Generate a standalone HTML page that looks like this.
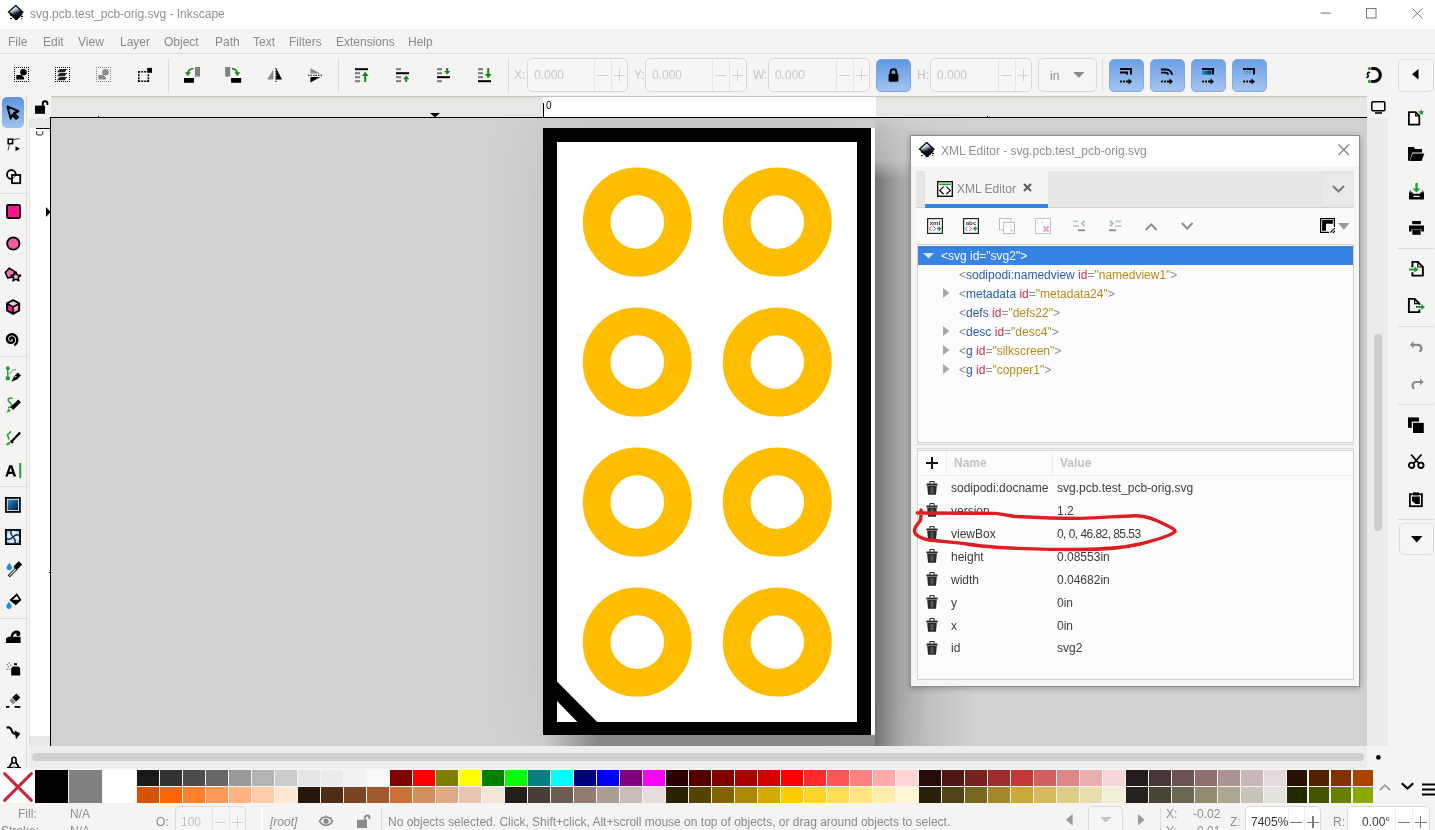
<!DOCTYPE html><html><head><meta charset="utf-8"><style>
*{margin:0;padding:0;box-sizing:border-box}
html,body{width:1435px;height:830px;overflow:hidden;background:#f5f4f2;font-family:"Liberation Sans",sans-serif;font-size:12px;position:relative}
.t{position:absolute;white-space:nowrap;line-height:14px;will-change:transform}
svg{position:absolute;overflow:visible}
</style></head><body>
<div style="position:absolute;left:0px;top:0px;width:1435px;height:29px;background:#fff"></div>
<div class="t" style="left:29.5px;top:7px;color:#8f8f8f">svg.pcb.test_pcb-orig.svg - Inkscape</div>
<div style="position:absolute;left:0px;top:53px;width:1435px;height:1px;background:#dfdedc"></div>
<div class="t" style="left:8px;top:35px;color:#8a8a8a">File</div>
<div class="t" style="left:42.5px;top:35px;color:#8a8a8a">Edit</div>
<div class="t" style="left:78px;top:35px;color:#8a8a8a">View</div>
<div class="t" style="left:119.5px;top:35px;color:#8a8a8a">Layer</div>
<div class="t" style="left:163.5px;top:35px;color:#8a8a8a">Object</div>
<div class="t" style="left:214.5px;top:35px;color:#8a8a8a">Path</div>
<div class="t" style="left:253px;top:35px;color:#8a8a8a">Text</div>
<div class="t" style="left:289px;top:35px;color:#8a8a8a">Filters</div>
<div class="t" style="left:336px;top:35px;color:#8a8a8a">Extensions</div>
<div class="t" style="left:408px;top:35px;color:#8a8a8a">Help</div>
<div style="position:absolute;left:51px;top:118px;width:1316px;height:628px;background:#d1d1d1"></div>
<div style="position:absolute;left:51px;top:96px;width:1316px;height:22px;background:#e8e7e5"></div>
<div style="position:absolute;left:543px;top:97px;width:333px;height:20px;background:#fff"></div>
<div style="position:absolute;left:51px;top:96px;width:1316px;height:1px;background:#c6c5c1"></div>
<div style="position:absolute;left:51px;top:97px;width:1316px;height:4px;background:linear-gradient(rgba(0,0,0,.035),rgba(0,0,0,0))"></div>
<div style="position:absolute;left:51px;top:117px;width:1316px;height:1px;background:#000"></div>
<div style="position:absolute;left:29px;top:118px;width:22px;height:628px;background:#e8e7e5"></div>
<div style="position:absolute;left:29px;top:128px;width:21px;height:608px;background:#fff"></div>
<div style="position:absolute;left:50px;top:117px;width:1px;height:629px;background:#000"></div>
<div style="position:absolute;left:51px;top:118px;width:1316px;height:628px;overflow:hidden">
<div style="position:absolute;left:824px;top:0px;width:100px;height:628px;background:linear-gradient(to right,rgba(0,0,0,.44) 0,rgba(0,0,0,.30) 12px,rgba(0,0,0,.19) 25px,rgba(0,0,0,.08) 55px,rgba(0,0,0,.03) 80px,rgba(0,0,0,0) 100px);-webkit-mask-image:linear-gradient(to bottom,rgba(0,0,0,.04) 0,rgba(0,0,0,.2) 12px,rgba(0,0,0,.3) 42px,#000 62px)"></div>
<div style="position:absolute;left:492px;top:617px;width:332px;height:11px;background:rgba(0,0,0,.32);-webkit-mask-image:linear-gradient(to right,transparent 0,#000 55px)"></div>
<div style="position:absolute;left:492px;top:10px;width:332px;height:607px;background:#fff;box-shadow:0 0 60px rgba(0,0,0,0.09)"></div>
<div style="position:absolute;left:492px;top:10px;width:328px;height:607px;background:#000"></div>
<div style="position:absolute;left:506px;top:24px;width:300px;height:580px;background:#fff"></div>
<svg style="left:0;top:0" width="1316" height="628"><polygon points="506,563.4 546.2,604 526.4,604 506,583.1" fill="#000"/></svg>
<svg style="left:0;top:0" width="1316" height="628"><circle cx="586.25" cy="104.1" r="40.65" fill="none" stroke="#ffbd00" stroke-width="27.7"/><circle cx="586.25" cy="244.10000000000002" r="40.65" fill="none" stroke="#ffbd00" stroke-width="27.7"/><circle cx="586.25" cy="384.1" r="40.65" fill="none" stroke="#ffbd00" stroke-width="27.7"/><circle cx="586.25" cy="524.1" r="40.65" fill="none" stroke="#ffbd00" stroke-width="27.7"/><circle cx="726.25" cy="104.1" r="40.65" fill="none" stroke="#ffbd00" stroke-width="27.7"/><circle cx="726.25" cy="244.10000000000002" r="40.65" fill="none" stroke="#ffbd00" stroke-width="27.7"/><circle cx="726.25" cy="384.1" r="40.65" fill="none" stroke="#ffbd00" stroke-width="27.7"/><circle cx="726.25" cy="524.1" r="40.65" fill="none" stroke="#ffbd00" stroke-width="27.7"/></svg>
</div>
<div style="position:absolute;left:910px;top:135px;width:450px;height:552px;background:#f6f5f4;border:1px solid #8e8e8e;box-shadow:0 1px 6px rgba(0,0,0,0.3)"></div>
<div style="position:absolute;left:911px;top:136px;width:448px;height:30px;background:#fff"></div>
<div class="t" style="left:940.5px;top:144px;color:#8f8f8f">XML Editor - svg.pcb.test_pcb-orig.svg</div>
<svg style="left:1338px;top:144px" width="12" height="12"><path d="M0.5 0.5L11 11M11 0.5L0.5 11" stroke="#7a7a7a" stroke-width="1.1"/></svg>
<div style="position:absolute;left:916px;top:171px;width:438px;height:37px;background:#e7e6e4;border-bottom:1px solid #d4d3d1"></div>
<div style="position:absolute;left:924.5px;top:171px;width:123px;height:37px;background:#f5f4f2"></div>
<div style="position:absolute;left:924.5px;top:204px;width:123px;height:3.5px;background:#3584e4"></div>
<div class="t" style="left:957px;top:182px;color:#8a8a8a">XML Editor</div>
<svg style="left:1023px;top:183px" width="9" height="9"><path d="M1 1L8 8M8 1L1 8" stroke="#5a5a5a" stroke-width="2"/></svg>
<div style="position:absolute;left:1323px;top:174px;width:31px;height:30px;background:#ebeae8;border-radius:5px"></div>
<svg style="left:1331.5px;top:185px" width="13" height="8"><path d="M1 1L6.5 6.5L12 1" fill="none" stroke="#7a7a7a" stroke-width="2"/></svg>
<div style="position:absolute;left:916px;top:208px;width:438px;height:37px;background:#fafafa"></div>
<div style="position:absolute;left:917px;top:244px;width:437px;height:199px;background:#fcfcfc;border:1px solid #d3d2d0"></div>
<div style="position:absolute;left:918px;top:245.5px;width:434.5px;height:19px;background:#3584e4"></div>
<div style="position:absolute;left:916px;top:444px;width:438px;height:1px;background:#d8d7d5"></div>
<div style="position:absolute;left:916px;top:448px;width:438px;height:1px;background:#d8d7d5"></div>
<div style="position:absolute;left:917px;top:450px;width:437px;height:230px;background:#fcfcfc;border:1px solid #d3d2d0"></div>
<div style="position:absolute;left:918px;top:475px;width:435px;height:1px;background:#ededed"></div>
<div style="position:absolute;left:946px;top:451px;width:1px;height:24px;background:#f0f0f0"></div>
<div style="position:absolute;left:1052px;top:451px;width:1px;height:24px;background:#f0f0f0"></div>
<div class="t" style="left:954px;top:456px;color:#c2c2c2;font-weight:bold">Name</div>
<div class="t" style="left:1059.5px;top:456px;color:#c2c2c2;font-weight:bold">Value</div>
<div class="t" style="left:941.2px;top:248.5px;color:#fff">&lt;svg id="svg2"&gt;</div>
<svg style="left:922.5px;top:253px" width="11" height="6"><polygon points="0,0 11,0 5.5,5.5" fill="#d6e6fb"/></svg>
<div class="t" style="left:958.9px;top:267.5px;"><span style="color:#8c8c8c">&lt;</span><span style="color:#2e5cac">sodipodi:namedview</span> <span style="color:#c4304c">id</span><span style="color:#909090">=</span><span style="color:#b38d1c">"namedview1"</span><span style="color:#8c8c8c">&gt;</span></div>
<div class="t" style="left:958.9px;top:286.5px;"><span style="color:#8c8c8c">&lt;</span><span style="color:#2e5cac">metadata</span> <span style="color:#c4304c">id</span><span style="color:#909090">=</span><span style="color:#b38d1c">"metadata24"</span><span style="color:#8c8c8c">&gt;</span></div>
<svg style="left:943px;top:288.0px" width="7" height="10"><polygon points="0,0 6.5,5 0,10" fill="#a8a8a8"/></svg>
<div class="t" style="left:958.9px;top:305.5px;"><span style="color:#8c8c8c">&lt;</span><span style="color:#2e5cac">defs</span> <span style="color:#c4304c">id</span><span style="color:#909090">=</span><span style="color:#b38d1c">"defs22"</span><span style="color:#8c8c8c">&gt;</span></div>
<div class="t" style="left:958.9px;top:324.5px;"><span style="color:#8c8c8c">&lt;</span><span style="color:#2e5cac">desc</span> <span style="color:#c4304c">id</span><span style="color:#909090">=</span><span style="color:#b38d1c">"desc4"</span><span style="color:#8c8c8c">&gt;</span></div>
<svg style="left:943px;top:326.0px" width="7" height="10"><polygon points="0,0 6.5,5 0,10" fill="#a8a8a8"/></svg>
<div class="t" style="left:958.9px;top:343.5px;"><span style="color:#8c8c8c">&lt;</span><span style="color:#2e5cac">g</span> <span style="color:#c4304c">id</span><span style="color:#909090">=</span><span style="color:#b38d1c">"silkscreen"</span><span style="color:#8c8c8c">&gt;</span></div>
<svg style="left:943px;top:345.0px" width="7" height="10"><polygon points="0,0 6.5,5 0,10" fill="#a8a8a8"/></svg>
<div class="t" style="left:958.9px;top:362.5px;"><span style="color:#8c8c8c">&lt;</span><span style="color:#2e5cac">g</span> <span style="color:#c4304c">id</span><span style="color:#909090">=</span><span style="color:#b38d1c">"copper1"</span><span style="color:#8c8c8c">&gt;</span></div>
<svg style="left:943px;top:364.0px" width="7" height="10"><polygon points="0,0 6.5,5 0,10" fill="#a8a8a8"/></svg>
<svg style="left:926.3px;top:480.5px" width="12" height="14" viewBox="0 0 12 14"><defs><linearGradient id="tg" x1="0" x2="1"><stop offset="0" stop-color="#222"/><stop offset="0.5" stop-color="#777"/><stop offset="1" stop-color="#222"/></linearGradient></defs><path d="M3.8 2.4V1.4a0.9 0.9 0 0 1 0.9-0.9h2.6a0.9 0.9 0 0 1 0.9 0.9V2.4" fill="none" stroke="#2a2a2a" stroke-width="1.1"/><rect x="0.3" y="2.4" width="11.4" height="2" rx="0.6" fill="#2a2a2a"/><path d="M1.2 4.8h9.6l-0.8 8.9h-8z" fill="#2a2a2a"/><path d="M3.3 6v6.4h5.4V6z" fill="url(#tg)"/><path d="M5 6v6.4M7 6v6.4" stroke="#2a2a2a" stroke-width="0.6"/></svg>
<div class="t" style="left:951.4px;top:480.8px;color:#3c3c3c">sodipodi:docname</div>
<div class="t" style="left:1057.3px;top:480.8px;color:#3c3c3c">svg.pcb.test_pcb-orig.svg</div>
<svg style="left:926.3px;top:503.45px" width="12" height="14" viewBox="0 0 12 14"><defs><linearGradient id="tg" x1="0" x2="1"><stop offset="0" stop-color="#222"/><stop offset="0.5" stop-color="#777"/><stop offset="1" stop-color="#222"/></linearGradient></defs><path d="M3.8 2.4V1.4a0.9 0.9 0 0 1 0.9-0.9h2.6a0.9 0.9 0 0 1 0.9 0.9V2.4" fill="none" stroke="#2a2a2a" stroke-width="1.1"/><rect x="0.3" y="2.4" width="11.4" height="2" rx="0.6" fill="#2a2a2a"/><path d="M1.2 4.8h9.6l-0.8 8.9h-8z" fill="#2a2a2a"/><path d="M3.3 6v6.4h5.4V6z" fill="url(#tg)"/><path d="M5 6v6.4M7 6v6.4" stroke="#2a2a2a" stroke-width="0.6"/></svg>
<div class="t" style="left:951.4px;top:503.75px;color:#3c3c3c">version</div>
<div class="t" style="left:1057.3px;top:503.75px;color:#3c3c3c">1.2</div>
<svg style="left:926.3px;top:526.4000000000001px" width="12" height="14" viewBox="0 0 12 14"><defs><linearGradient id="tg" x1="0" x2="1"><stop offset="0" stop-color="#222"/><stop offset="0.5" stop-color="#777"/><stop offset="1" stop-color="#222"/></linearGradient></defs><path d="M3.8 2.4V1.4a0.9 0.9 0 0 1 0.9-0.9h2.6a0.9 0.9 0 0 1 0.9 0.9V2.4" fill="none" stroke="#2a2a2a" stroke-width="1.1"/><rect x="0.3" y="2.4" width="11.4" height="2" rx="0.6" fill="#2a2a2a"/><path d="M1.2 4.8h9.6l-0.8 8.9h-8z" fill="#2a2a2a"/><path d="M3.3 6v6.4h5.4V6z" fill="url(#tg)"/><path d="M5 6v6.4M7 6v6.4" stroke="#2a2a2a" stroke-width="0.6"/></svg>
<div class="t" style="left:951.4px;top:526.7px;color:#3c3c3c">viewBox</div>
<div class="t" style="left:1057.3px;top:526.7px;color:#3c3c3c;letter-spacing:-0.55px">0, 0, 46.82, 85.53</div>
<svg style="left:926.3px;top:549.35px" width="12" height="14" viewBox="0 0 12 14"><defs><linearGradient id="tg" x1="0" x2="1"><stop offset="0" stop-color="#222"/><stop offset="0.5" stop-color="#777"/><stop offset="1" stop-color="#222"/></linearGradient></defs><path d="M3.8 2.4V1.4a0.9 0.9 0 0 1 0.9-0.9h2.6a0.9 0.9 0 0 1 0.9 0.9V2.4" fill="none" stroke="#2a2a2a" stroke-width="1.1"/><rect x="0.3" y="2.4" width="11.4" height="2" rx="0.6" fill="#2a2a2a"/><path d="M1.2 4.8h9.6l-0.8 8.9h-8z" fill="#2a2a2a"/><path d="M3.3 6v6.4h5.4V6z" fill="url(#tg)"/><path d="M5 6v6.4M7 6v6.4" stroke="#2a2a2a" stroke-width="0.6"/></svg>
<div class="t" style="left:951.4px;top:549.65px;color:#3c3c3c">height</div>
<div class="t" style="left:1057.3px;top:549.65px;color:#3c3c3c">0.08553in</div>
<svg style="left:926.3px;top:572.3000000000001px" width="12" height="14" viewBox="0 0 12 14"><defs><linearGradient id="tg" x1="0" x2="1"><stop offset="0" stop-color="#222"/><stop offset="0.5" stop-color="#777"/><stop offset="1" stop-color="#222"/></linearGradient></defs><path d="M3.8 2.4V1.4a0.9 0.9 0 0 1 0.9-0.9h2.6a0.9 0.9 0 0 1 0.9 0.9V2.4" fill="none" stroke="#2a2a2a" stroke-width="1.1"/><rect x="0.3" y="2.4" width="11.4" height="2" rx="0.6" fill="#2a2a2a"/><path d="M1.2 4.8h9.6l-0.8 8.9h-8z" fill="#2a2a2a"/><path d="M3.3 6v6.4h5.4V6z" fill="url(#tg)"/><path d="M5 6v6.4M7 6v6.4" stroke="#2a2a2a" stroke-width="0.6"/></svg>
<div class="t" style="left:951.4px;top:572.6px;color:#3c3c3c">width</div>
<div class="t" style="left:1057.3px;top:572.6px;color:#3c3c3c">0.04682in</div>
<svg style="left:926.3px;top:595.25px" width="12" height="14" viewBox="0 0 12 14"><defs><linearGradient id="tg" x1="0" x2="1"><stop offset="0" stop-color="#222"/><stop offset="0.5" stop-color="#777"/><stop offset="1" stop-color="#222"/></linearGradient></defs><path d="M3.8 2.4V1.4a0.9 0.9 0 0 1 0.9-0.9h2.6a0.9 0.9 0 0 1 0.9 0.9V2.4" fill="none" stroke="#2a2a2a" stroke-width="1.1"/><rect x="0.3" y="2.4" width="11.4" height="2" rx="0.6" fill="#2a2a2a"/><path d="M1.2 4.8h9.6l-0.8 8.9h-8z" fill="#2a2a2a"/><path d="M3.3 6v6.4h5.4V6z" fill="url(#tg)"/><path d="M5 6v6.4M7 6v6.4" stroke="#2a2a2a" stroke-width="0.6"/></svg>
<div class="t" style="left:951.4px;top:595.55px;color:#3c3c3c">y</div>
<div class="t" style="left:1057.3px;top:595.55px;color:#3c3c3c">0in</div>
<svg style="left:926.3px;top:618.2px" width="12" height="14" viewBox="0 0 12 14"><defs><linearGradient id="tg" x1="0" x2="1"><stop offset="0" stop-color="#222"/><stop offset="0.5" stop-color="#777"/><stop offset="1" stop-color="#222"/></linearGradient></defs><path d="M3.8 2.4V1.4a0.9 0.9 0 0 1 0.9-0.9h2.6a0.9 0.9 0 0 1 0.9 0.9V2.4" fill="none" stroke="#2a2a2a" stroke-width="1.1"/><rect x="0.3" y="2.4" width="11.4" height="2" rx="0.6" fill="#2a2a2a"/><path d="M1.2 4.8h9.6l-0.8 8.9h-8z" fill="#2a2a2a"/><path d="M3.3 6v6.4h5.4V6z" fill="url(#tg)"/><path d="M5 6v6.4M7 6v6.4" stroke="#2a2a2a" stroke-width="0.6"/></svg>
<div class="t" style="left:951.4px;top:618.5px;color:#3c3c3c">x</div>
<div class="t" style="left:1057.3px;top:618.5px;color:#3c3c3c">0in</div>
<svg style="left:926.3px;top:641.1500000000001px" width="12" height="14" viewBox="0 0 12 14"><defs><linearGradient id="tg" x1="0" x2="1"><stop offset="0" stop-color="#222"/><stop offset="0.5" stop-color="#777"/><stop offset="1" stop-color="#222"/></linearGradient></defs><path d="M3.8 2.4V1.4a0.9 0.9 0 0 1 0.9-0.9h2.6a0.9 0.9 0 0 1 0.9 0.9V2.4" fill="none" stroke="#2a2a2a" stroke-width="1.1"/><rect x="0.3" y="2.4" width="11.4" height="2" rx="0.6" fill="#2a2a2a"/><path d="M1.2 4.8h9.6l-0.8 8.9h-8z" fill="#2a2a2a"/><path d="M3.3 6v6.4h5.4V6z" fill="url(#tg)"/><path d="M5 6v6.4M7 6v6.4" stroke="#2a2a2a" stroke-width="0.6"/></svg>
<div class="t" style="left:951.4px;top:641.45px;color:#3c3c3c">id</div>
<div class="t" style="left:1057.3px;top:641.45px;color:#3c3c3c">svg2</div>
<svg style="left:926px;top:457px" width="12" height="12"><path d="M6 0v12M0 6h12" stroke="#111" stroke-width="2"/></svg>
<svg style="left:0;top:0" width="1435" height="830"><path d="M917.3 513 C940 513,975 513,995.4 513.4 C1003 514,1010 516,1015 516.5 C1040 517.8,1060 518.4,1080 518.4 C1100 518,1120 516,1135 515.7 C1145 515.5,1152 518,1162 523 C1170 527,1176 529.5,1175 531.5 C1173 534,1160 539,1140 544 C1125 547.5,1100 549.5,1080 549.5 C1055 549.5,1030 548.8,1015 548.3 C1000 547.5,990 546.8,981.6 546 C970 544.8,965 543.5,958.6 542.9 C945 541.5,935 541,928 539.8 C920 538,915 535.5,914.5 531.5 C914 527,918 524,920 521 C921.5 518,921 513,921 510" fill="none" stroke="#dc1f22" stroke-width="3.4" stroke-linecap="round" stroke-linejoin="round"/></svg>
<svg style="left:8.3px;top:5px" width="16" height="16" viewBox="0 0 16 16"><defs><linearGradient id="lg" x1="0.25" y1="0.1" x2="0.75" y2="0.9"><stop offset="0" stop-color="#ffffff"/><stop offset="0.35" stop-color="#c9d0dc"/><stop offset="0.7" stop-color="#1c2740"/><stop offset="1" stop-color="#05070c"/></linearGradient></defs><polygon points="7.7,0.6 15,7.3 7.7,11.6 0.4,7.3" fill="url(#lg)" stroke="#0a0a0a" stroke-width="1.3" stroke-linejoin="round"/><path d="M1.6 8.4L5 10.2L10.6 10.2L14.2 8.6L14.6 9.8L12.4 11.2L11.8 12.6L10.4 13.2L9.8 14.6L8.4 15.2L6.8 15L6.2 13.6L4.8 12.8L3.8 11.2L2 10.4z" fill="#000"/><rect x="2" y="13" width="1.8" height="1.1" fill="#000"/><rect x="13" y="11" width="2" height="1.1" fill="#000"/><rect x="13.2" y="13.1" width="1" height="1" fill="#000"/></svg>
<svg style="left:919px;top:142.3px" width="16" height="16" viewBox="0 0 16 16"><defs><linearGradient id="lg" x1="0.25" y1="0.1" x2="0.75" y2="0.9"><stop offset="0" stop-color="#ffffff"/><stop offset="0.35" stop-color="#c9d0dc"/><stop offset="0.7" stop-color="#1c2740"/><stop offset="1" stop-color="#05070c"/></linearGradient></defs><polygon points="7.7,0.6 15,7.3 7.7,11.6 0.4,7.3" fill="url(#lg)" stroke="#0a0a0a" stroke-width="1.3" stroke-linejoin="round"/><path d="M1.6 8.4L5 10.2L10.6 10.2L14.2 8.6L14.6 9.8L12.4 11.2L11.8 12.6L10.4 13.2L9.8 14.6L8.4 15.2L6.8 15L6.2 13.6L4.8 12.8L3.8 11.2L2 10.4z" fill="#000"/><rect x="2" y="13" width="1.8" height="1.1" fill="#000"/><rect x="13" y="11" width="2" height="1.1" fill="#000"/><rect x="13.2" y="13.1" width="1" height="1" fill="#000"/></svg>
<svg style="left:1320px;top:12px" width="12" height="2" viewBox="0 0 12 2"><rect x="0.5" y="0.6" width="10.4" height="1" fill="#767676"/></svg>
<svg style="left:1366px;top:8px" width="11" height="11" viewBox="0 0 11 11"><rect x="0.5" y="0.5" width="9.5" height="9.5" fill="none" stroke="#767676" stroke-width="1"/></svg>
<svg style="left:1411.5px;top:8px" width="11" height="11" viewBox="0 0 11 11"><path d="M0.3 0.3L10.5 10.5M10.5 0.3L0.3 10.5" stroke="#767676" stroke-width="1"/></svg>
<svg style="left:14px;top:67px" width="15" height="15" viewBox="0 0 15 15"><rect x="0" y="0" width="1" height="1" fill="#000"/><rect x="0" y="14" width="1" height="1" fill="#000"/><rect x="2" y="0" width="1" height="1" fill="#000"/><rect x="2" y="14" width="1" height="1" fill="#000"/><rect x="0" y="2" width="1" height="1" fill="#000"/><rect x="14" y="2" width="1" height="1" fill="#000"/><rect x="4" y="0" width="1" height="1" fill="#000"/><rect x="4" y="14" width="1" height="1" fill="#000"/><rect x="0" y="4" width="1" height="1" fill="#000"/><rect x="14" y="4" width="1" height="1" fill="#000"/><rect x="6" y="0" width="1" height="1" fill="#000"/><rect x="6" y="14" width="1" height="1" fill="#000"/><rect x="0" y="6" width="1" height="1" fill="#000"/><rect x="14" y="6" width="1" height="1" fill="#000"/><rect x="8" y="0" width="1" height="1" fill="#000"/><rect x="8" y="14" width="1" height="1" fill="#000"/><rect x="0" y="8" width="1" height="1" fill="#000"/><rect x="14" y="8" width="1" height="1" fill="#000"/><rect x="10" y="0" width="1" height="1" fill="#000"/><rect x="10" y="14" width="1" height="1" fill="#000"/><rect x="0" y="10" width="1" height="1" fill="#000"/><rect x="14" y="10" width="1" height="1" fill="#000"/><rect x="12" y="0" width="1" height="1" fill="#000"/><rect x="12" y="14" width="1" height="1" fill="#000"/><rect x="0" y="12" width="1" height="1" fill="#000"/><rect x="14" y="12" width="1" height="1" fill="#000"/><rect x="14" y="0" width="1" height="1" fill="#000"/><rect x="14" y="14" width="1" height="1" fill="#000"/><circle cx="9.5" cy="5.3" r="3.3" fill="#000"/><path d="M2.3 8h5.5a3.8 3.8 0 0 0 2.2 2.3V12.5H2.3z" fill="#000"/></svg>
<svg style="left:55px;top:67px" width="15" height="15" viewBox="0 0 15 15"><rect x="0" y="0" width="1" height="1" fill="#000"/><rect x="0" y="14" width="1" height="1" fill="#000"/><rect x="2" y="0" width="1" height="1" fill="#000"/><rect x="2" y="14" width="1" height="1" fill="#000"/><rect x="0" y="2" width="1" height="1" fill="#000"/><rect x="14" y="2" width="1" height="1" fill="#000"/><rect x="4" y="0" width="1" height="1" fill="#000"/><rect x="4" y="14" width="1" height="1" fill="#000"/><rect x="0" y="4" width="1" height="1" fill="#000"/><rect x="14" y="4" width="1" height="1" fill="#000"/><rect x="6" y="0" width="1" height="1" fill="#000"/><rect x="6" y="14" width="1" height="1" fill="#000"/><rect x="0" y="6" width="1" height="1" fill="#000"/><rect x="14" y="6" width="1" height="1" fill="#000"/><rect x="8" y="0" width="1" height="1" fill="#000"/><rect x="8" y="14" width="1" height="1" fill="#000"/><rect x="0" y="8" width="1" height="1" fill="#000"/><rect x="14" y="8" width="1" height="1" fill="#000"/><rect x="10" y="0" width="1" height="1" fill="#000"/><rect x="10" y="14" width="1" height="1" fill="#000"/><rect x="0" y="10" width="1" height="1" fill="#000"/><rect x="14" y="10" width="1" height="1" fill="#000"/><rect x="12" y="0" width="1" height="1" fill="#000"/><rect x="12" y="14" width="1" height="1" fill="#000"/><rect x="0" y="12" width="1" height="1" fill="#000"/><rect x="14" y="12" width="1" height="1" fill="#000"/><rect x="14" y="0" width="1" height="1" fill="#000"/><rect x="14" y="14" width="1" height="1" fill="#000"/><path d="M4.6 2h7.6l-2.6 3.2H2z M4.6 6h7.6l-2.6 3.2H2z M4.6 10h7.6l-2.6 3.2H2z" fill="#222"/></svg>
<svg style="left:96px;top:67px" width="15" height="15" viewBox="0 0 15 15"><rect x="0" y="0" width="1" height="1" fill="#8a8a8a"/><rect x="0" y="14" width="1" height="1" fill="#8a8a8a"/><rect x="2" y="0" width="1" height="1" fill="#8a8a8a"/><rect x="2" y="14" width="1" height="1" fill="#8a8a8a"/><rect x="0" y="2" width="1" height="1" fill="#8a8a8a"/><rect x="14" y="2" width="1" height="1" fill="#8a8a8a"/><rect x="4" y="0" width="1" height="1" fill="#8a8a8a"/><rect x="4" y="14" width="1" height="1" fill="#8a8a8a"/><rect x="0" y="4" width="1" height="1" fill="#8a8a8a"/><rect x="14" y="4" width="1" height="1" fill="#8a8a8a"/><rect x="6" y="0" width="1" height="1" fill="#8a8a8a"/><rect x="6" y="14" width="1" height="1" fill="#8a8a8a"/><rect x="0" y="6" width="1" height="1" fill="#8a8a8a"/><rect x="14" y="6" width="1" height="1" fill="#8a8a8a"/><rect x="8" y="0" width="1" height="1" fill="#8a8a8a"/><rect x="8" y="14" width="1" height="1" fill="#8a8a8a"/><rect x="0" y="8" width="1" height="1" fill="#8a8a8a"/><rect x="14" y="8" width="1" height="1" fill="#8a8a8a"/><rect x="10" y="0" width="1" height="1" fill="#8a8a8a"/><rect x="10" y="14" width="1" height="1" fill="#8a8a8a"/><rect x="0" y="10" width="1" height="1" fill="#8a8a8a"/><rect x="14" y="10" width="1" height="1" fill="#8a8a8a"/><rect x="12" y="0" width="1" height="1" fill="#8a8a8a"/><rect x="12" y="14" width="1" height="1" fill="#8a8a8a"/><rect x="0" y="12" width="1" height="1" fill="#8a8a8a"/><rect x="14" y="12" width="1" height="1" fill="#8a8a8a"/><rect x="14" y="0" width="1" height="1" fill="#8a8a8a"/><rect x="14" y="14" width="1" height="1" fill="#8a8a8a"/><circle cx="9.5" cy="5.3" r="3.3" fill="#8a8a8a"/><path d="M2.3 8h5.5a3.8 3.8 0 0 0 2.2 2.3V12.5H2.3z" fill="#8a8a8a"/></svg>
<svg style="left:137px;top:67px" width="16" height="16" viewBox="0 0 16 16"><rect x="1" y="4" width="2.2" height="1.5" fill="#000"/><rect x="1" y="4" width="1.5" height="2.2" fill="#000"/><rect x="1" y="13.5" width="2.2" height="1.5" fill="#000"/><rect x="1" y="12.799999999999997" width="1.5" height="2.2" fill="#000"/><rect x="9.900000000000006" y="13.5" width="2.2" height="1.5" fill="#000"/><rect x="10.599999999999994" y="12.799999999999997" width="1.5" height="2.2" fill="#000"/><rect x="4.199999999999989" y="4" width="2" height="1.5" fill="#000"/><rect x="7.199999999999989" y="4" width="2" height="1.5" fill="#000"/><rect x="4.199999999999989" y="13.5" width="2" height="1.5" fill="#000"/><rect x="7.199999999999989" y="13.5" width="2" height="1.5" fill="#000"/><rect x="1" y="7.200000000000003" width="1.5" height="2" fill="#000"/><rect x="1" y="10.200000000000003" width="1.5" height="2" fill="#000"/><rect x="10.599999999999994" y="7.200000000000003" width="1.5" height="2" fill="#000"/><rect x="10.599999999999994" y="10.200000000000003" width="1.5" height="2" fill="#000"/><rect x="10.199999999999989" y="0.9000000000000057" width="4.8" height="4.9" fill="#000"/></svg>
<div style="position:absolute;left:168px;top:58px;width:1px;height:34px;background:#dcdbd9"></div>
<div style="position:absolute;left:338px;top:58px;width:1px;height:34px;background:#dcdbd9"></div>
<div style="position:absolute;left:508px;top:58px;width:1px;height:34px;background:#dcdbd9"></div>
<div style="position:absolute;left:1102px;top:58px;width:1px;height:34px;background:#dcdbd9"></div>
<svg style="left:184px;top:67px" width="17" height="16" viewBox="0 0 17 16"><rect x="11" y="0" width="5" height="9.6" fill="#808080"/><rect x="0" y="11" width="10" height="4.8" fill="#000"/><path d="M9.3 1.6C5.8 1.8 4.2 3.6 3.8 6.2" fill="none" stroke="#1f8c1f" stroke-width="1.9"/><path d="M0.8 5.2L3.8 9.2L6.8 5.2z" fill="#1f8c1f"/></svg>
<svg style="left:225px;top:67px" width="17" height="16" viewBox="0 0 17 16"><rect x="0.2" y="0" width="5" height="9.6" fill="#808080"/><rect x="6.1" y="11" width="10" height="4.8" fill="#000"/><path d="M6.9 1.6C10.4 1.8 12 3.6 12.4 6.2" fill="none" stroke="#1f8c1f" stroke-width="1.9"/><path d="M9.4 5.2L12.4 9.2L15.4 5.2z" fill="#1f8c1f"/></svg>
<svg style="left:267px;top:68px" width="16" height="14" viewBox="0 0 16 14"><path d="M0.2 11.5L6.4 1.5V11.5z" fill="#8c8c8c"/><path d="M9 0.3V14" stroke="#000" stroke-width="1.1" stroke-dasharray="1.5 1"/><path d="M9.2 0.2L15 11.5H9.2z" fill="#000"/></svg>
<svg style="left:308px;top:68px" width="15" height="15" viewBox="0 0 15 15"><path d="M2.4 0.2L12.4 5.5H2.4z" fill="#8c8c8c"/><path d="M0 7.3H14.2" stroke="#000" stroke-width="1.1" stroke-dasharray="1.5 1"/><path d="M2.4 9L12.4 9H2.4L2.4 14.6z" fill="#000"/><path d="M2.4 14.6L12.4 9H2.4z" fill="#000"/></svg>
<svg style="left:355px;top:68px" width="14" height="15" viewBox="0 0 14 15"><rect x="0" y="0.2" width="13" height="2" fill="#000"/><rect x="0" y="4.2" width="5" height="2" fill="#7a7a7a"/><rect x="0" y="8.2" width="5" height="2" fill="#7a7a7a"/><rect x="0" y="12.2" width="5" height="2" fill="#7a7a7a"/><path d="M10.2 14V7" stroke="#15871f" stroke-width="2"/><path d="M6.8 8L10.2 3.8L13.6 8z" fill="#15871f"/></svg>
<svg style="left:396px;top:68px" width="14" height="15" viewBox="0 0 14 15"><rect x="0" y="0.2" width="5" height="2" fill="#7a7a7a"/><rect x="0" y="4.2" width="13" height="2" fill="#000"/><rect x="0" y="8.2" width="5" height="2" fill="#7a7a7a"/><rect x="0" y="12.2" width="5" height="2" fill="#7a7a7a"/><path d="M10.2 14V10.5" stroke="#15871f" stroke-width="2"/><path d="M7 11.2L10.2 7.4L13.4 11.2z" fill="#15871f"/></svg>
<svg style="left:437px;top:68px" width="14" height="15" viewBox="0 0 14 15"><rect x="0" y="0.2" width="5" height="2" fill="#7a7a7a"/><rect x="0" y="4.2" width="5" height="2" fill="#7a7a7a"/><rect x="0" y="8.2" width="13" height="2" fill="#000"/><rect x="0" y="12.2" width="5" height="2" fill="#7a7a7a"/><path d="M10.2 0V3.6" stroke="#15871f" stroke-width="2"/><path d="M7 3L10.2 6.6L13.4 3z" fill="#15871f"/></svg>
<svg style="left:478px;top:68px" width="14" height="15" viewBox="0 0 14 15"><rect x="0" y="0.2" width="5" height="2" fill="#7a7a7a"/><rect x="0" y="4.2" width="5" height="2" fill="#7a7a7a"/><rect x="0" y="8.2" width="5" height="2" fill="#7a7a7a"/><rect x="0" y="12.2" width="13" height="2" fill="#000"/><path d="M10.2 0V6.5" stroke="#15871f" stroke-width="2"/><path d="M6.8 6L10.2 10.2L13.6 6z" fill="#15871f"/></svg>
<div class="t" style="left:514px;top:67.5px;color:#c4c4c4">X:</div><div style="position:absolute;left:527px;top:58px;width:101px;height:34px;background:#f7f6f5;border:1px solid #d9d8d6;border-radius:5px"></div><div style="position:absolute;left:593.5px;top:59px;width:1px;height:32px;background:#e6e5e3"></div><div style="position:absolute;left:610.5px;top:59px;width:1px;height:32px;background:#e6e5e3"></div><div class="t" style="left:533.5px;top:67.5px;color:#c8c8c8">0.000</div><div style="position:absolute;left:597.0px;top:74.5px;width:11px;height:1px;background:#d2d2d2"></div><div style="position:absolute;left:613.5px;top:74.5px;width:11px;height:1px;background:#d2d2d2"></div><div style="position:absolute;left:618.5px;top:69px;width:1px;height:11.5px;background:#d2d2d2"></div>
<div class="t" style="left:633.5px;top:67.5px;color:#c4c4c4">Y:</div><div style="position:absolute;left:645px;top:58px;width:101.5px;height:34px;background:#f7f6f5;border:1px solid #d9d8d6;border-radius:5px"></div><div style="position:absolute;left:711.5px;top:59px;width:1px;height:32px;background:#e6e5e3"></div><div style="position:absolute;left:728.5px;top:59px;width:1px;height:32px;background:#e6e5e3"></div><div class="t" style="left:651.5px;top:67.5px;color:#c8c8c8">0.000</div><div style="position:absolute;left:715.0px;top:74.5px;width:11px;height:1px;background:#d2d2d2"></div><div style="position:absolute;left:731.5px;top:74.5px;width:11px;height:1px;background:#d2d2d2"></div><div style="position:absolute;left:736.5px;top:69px;width:1px;height:11.5px;background:#d2d2d2"></div>
<div class="t" style="left:752.5px;top:67.5px;color:#c4c4c4">W:</div><div style="position:absolute;left:768px;top:58px;width:102px;height:34px;background:#f7f6f5;border:1px solid #d9d8d6;border-radius:5px"></div><div style="position:absolute;left:835.5px;top:59px;width:1px;height:32px;background:#e6e5e3"></div><div style="position:absolute;left:852.5px;top:59px;width:1px;height:32px;background:#e6e5e3"></div><div class="t" style="left:774.5px;top:67.5px;color:#c8c8c8">0.000</div><div style="position:absolute;left:839.0px;top:74.5px;width:11px;height:1px;background:#d2d2d2"></div><div style="position:absolute;left:855.5px;top:74.5px;width:11px;height:1px;background:#d2d2d2"></div><div style="position:absolute;left:860.5px;top:69px;width:1px;height:11.5px;background:#d2d2d2"></div>
<div class="t" style="left:916.5px;top:67.5px;color:#c4c4c4">H:</div><div style="position:absolute;left:930px;top:58px;width:101.5px;height:34px;background:#f7f6f5;border:1px solid #d9d8d6;border-radius:5px"></div><div style="position:absolute;left:997.5px;top:59px;width:1px;height:32px;background:#e6e5e3"></div><div style="position:absolute;left:1014.5px;top:59px;width:1px;height:32px;background:#e6e5e3"></div><div class="t" style="left:936.5px;top:67.5px;color:#c8c8c8">0.000</div><div style="position:absolute;left:1001.0px;top:74.5px;width:11px;height:1px;background:#d2d2d2"></div><div style="position:absolute;left:1017.5px;top:74.5px;width:11px;height:1px;background:#d2d2d2"></div><div style="position:absolute;left:1022.5px;top:69px;width:1px;height:11.5px;background:#d2d2d2"></div>
<div style="position:absolute;left:875.5px;top:58.5px;width:35px;height:33px;background:linear-gradient(#5f98e3,#a3c4ef);border:1px solid #7aa7e0;border-radius:5px"></div>
<svg style="left:887.5px;top:68px" width="11" height="14" viewBox="0 0 11 14"><path d="M2.6 6V4.2a2.9 2.9 0 0 1 5.8 0V6" fill="none" stroke="#000" stroke-width="2"/><rect x="0.6" y="5.8" width="9.8" height="8" rx="1" fill="#000"/></svg>
<div style="position:absolute;left:1037.5px;top:58px;width:59px;height:34px;background:#f6f5f4;border:1px solid #d9d8d6;border-radius:5px"></div>
<div class="t" style="left:1049.5px;top:68.5px;color:#8a8a8a">in</div>
<svg style="left:1073px;top:72px" width="12" height="6" viewBox="0 0 12 6"><path d="M0 0H11.6L5.8 5.8z" fill="#8a8a8a"/></svg>
<div style="position:absolute;left:1108.5px;top:58.5px;width:35px;height:33px;background:linear-gradient(#6aa0e8,#a6c5ee);border:1px solid #83acdf;border-radius:5px"></div>
<div style="position:absolute;left:1149.5px;top:58.5px;width:35px;height:33px;background:linear-gradient(#6aa0e8,#a6c5ee);border:1px solid #83acdf;border-radius:5px"></div>
<div style="position:absolute;left:1190.5px;top:58.5px;width:35px;height:33px;background:linear-gradient(#6aa0e8,#a6c5ee);border:1px solid #83acdf;border-radius:5px"></div>
<div style="position:absolute;left:1231.5px;top:58.5px;width:35px;height:33px;background:linear-gradient(#6aa0e8,#a6c5ee);border:1px solid #83acdf;border-radius:5px"></div>
<svg style="left:1120px;top:68px" width="13" height="17" viewBox="0 0 13 17"><path d="M0 0h12v6.6h-2V2H0z M0 3.6h8v3h-2V5.4H0z" fill="#000"/><path d="M0.2 12.6h1.8v1.8H0.2zM3.2 12.6h1.8v1.8H3.2zM6 12.6h3v1.8H6z" fill="#000"/><path d="M8.6 10.4L12 13.5L8.6 16.6z" fill="#000"/></svg>
<svg style="left:1161px;top:68px" width="13" height="17" viewBox="0 0 13 17"><path d="M0 0.6h5a7 7 0 0 1 7 6.2h-2a5 5 0 0 0-5-4.3H0z M0 3.8h4.5a3.5 3.5 0 0 1 3.5 3h-2a1.6 1.6 0 0 0-1.5-1.2H0z" fill="#000"/><path d="M0.2 12.6h1.8v1.8H0.2zM3.2 12.6h1.8v1.8H3.2zM6 12.6h3v1.8H6z" fill="#000"/><path d="M8.6 10.4L12 13.5L8.6 16.6z" fill="#000"/></svg>
<svg style="left:1202px;top:68px" width="13" height="17" viewBox="0 0 13 17"><defs><linearGradient id="gb" x1="0" x2="1"><stop offset="0" stop-color="#00a0e0"/><stop offset="1" stop-color="#002040"/></linearGradient></defs><path d="M0 0h12v6.6h-2V2H0z" fill="#000"/><rect x="0" y="2.6" width="9.4" height="4" fill="url(#gb)"/><path d="M0.2 12.6h1.8v1.8H0.2zM3.2 12.6h1.8v1.8H3.2zM6 12.6h3v1.8H6z" fill="#000"/><path d="M8.6 10.4L12 13.5L8.6 16.6z" fill="#000"/></svg>
<svg style="left:1243px;top:68px" width="13" height="17" viewBox="0 0 13 17"><path d="M0 0h12v6.6h-2V2H0z" fill="#000"/><path d="M0.8 2.8l2 1.6-2 1.6M3.6 2.8l2 1.6-2 1.6M6.4 2.8l2 1.6-2 1.6" fill="none" stroke="#2a7fd4" stroke-width="0.9"/><path d="M0.2 12.6h1.8v1.8H0.2zM3.2 12.6h1.8v1.8H3.2zM6 12.6h3v1.8H6z" fill="#000"/><path d="M8.6 10.4L12 13.5L8.6 16.6z" fill="#000"/></svg>
<svg style="left:1366px;top:67px" width="17" height="17" viewBox="0 0 17 17"><path d="M5.2 1.5H7.8A6.5 6.5 0 0 1 7.8 14.5H5.2" fill="none" stroke="#000" stroke-width="3.1"/><circle cx="3.4" cy="1.5" r="1.55" fill="#2a8a3a"/><circle cx="3.4" cy="14.4" r="1.55" fill="#2a8a3a"/><path d="M4 5.8C2.6 4.8 0.8 6 1.8 7.6C2.8 9 2 10.6 0.4 10.4" fill="none" stroke="#000" stroke-width="1.6"/></svg>
<div style="position:absolute;left:1398px;top:58.5px;width:35.5px;height:33px;background:#f6f5f4;border:1px solid #dcdbd9;border-radius:5px"></div>
<svg style="left:1412px;top:69px" width="7" height="11" viewBox="0 0 7 11"><path d="M6.5 0V10.6L0 5.3z" fill="#000"/></svg>
<div style="position:absolute;left:1.8px;top:97.2px;width:22.5px;height:30.5px;background:linear-gradient(#5b96e2,#a0c2ee);border-radius:5px"></div>
<svg style="left:6px;top:105px" width="14" height="15" viewBox="0 0 14 15"><path d="M1.5 1.5L12.5 6.2L8 8L12 12.2L10.2 13.8L6.4 9.8L4.6 13.6z" fill="#7aa8e8" stroke="#000" stroke-width="2" stroke-linejoin="round"/></svg>
<svg style="left:6.5px;top:137.5px" width="14" height="14" viewBox="0 0 14 14"><rect x="1.2" y="1.2" width="4.4" height="4.4" fill="#fff" stroke="#000" stroke-width="1.6"/><path d="M5.6 1.6L12.5 0.6M2.5 5.8L1 12.5" stroke="#333" stroke-width="0.9"/><path d="M8.5 8.2L13 10.7L8.5 13.2z" fill="#000"/></svg>
<svg style="left:5.5px;top:169px" width="15" height="15" viewBox="0 0 15 15"><circle cx="5.4" cy="5.4" r="4.4" fill="none" stroke="#000" stroke-width="1.8"/><rect x="6" y="6" width="8.2" height="8.2" fill="#fff" stroke="#000" stroke-width="1.8"/><path d="M6.6 9.4a4.4 4.4 0 0 0 2.8-2.8" stroke="#000" stroke-width="0.8" fill="none"/></svg>
<div style="position:absolute;left:0px;top:193px;width:26px;height:1px;background:#dcdbd9"></div>
<svg style="left:5.5px;top:203.5px" width="15" height="15" viewBox="0 0 15 15"><rect x="1" y="1" width="13" height="13" rx="1.2" fill="#ff148c" stroke="#000" stroke-width="1.8"/></svg>
<svg style="left:5.5px;top:235.5px" width="15" height="15" viewBox="0 0 15 15"><circle cx="7.3" cy="7.5" r="6.2" fill="#f05aa0" stroke="#000" stroke-width="1.8"/></svg>
<svg style="left:4px;top:266px" width="18" height="18" viewBox="0 0 18 18"><polygon points="5.2,2.3 10.6,5.4 9.2,11 3.7,12 1.3,6.5" fill="#f071ab" stroke="#000" stroke-width="1.6" stroke-linejoin="round"/><polygon points="11.90,5.90 13.25,9.04 16.66,9.35 14.09,11.61 14.84,14.95 11.90,13.20 8.96,14.95 9.71,11.61 7.14,9.35 10.55,9.04" fill="#f7c0da" stroke="#000" stroke-width="1.5" stroke-linejoin="round"/></svg>
<svg style="left:4.9px;top:298px" width="17" height="18" viewBox="0 0 17 18"><g transform="scale(1.08)"><path d="M7.5 1L14 4.5V12L7.5 15.8L1 12V4.5z" fill="#000"/><path d="M7.5 3L11.6 5.2L7.5 7.4L3.4 5.2z" fill="#f9c6de"/><path d="M2.8 6.6L6.8 8.6V13.2L2.8 11z" fill="#f0208c"/><path d="M8.2 8.6L12.2 6.6V11L8.2 13.2z" fill="#f59ac4"/></g></svg>
<svg style="left:4.2px;top:332.5px" width="15" height="14" viewBox="0 0 15 14"><path d="M6.54 6.65 L6.45 6.57 L6.38 6.47 L6.31 6.36 L6.26 6.23 L6.23 6.09 L6.22 5.95 L6.23 5.79 L6.26 5.63 L6.31 5.47 L6.39 5.31 L6.49 5.16 L6.61 5.01 L6.76 4.88 L6.93 4.77 L7.12 4.68 L7.33 4.60 L7.55 4.56 L7.78 4.54 L8.02 4.55 L8.26 4.59 L8.50 4.67 L8.74 4.78 L8.97 4.92 L9.18 5.09 L9.38 5.29 L9.55 5.53 L9.70 5.78 L9.82 6.06 L9.90 6.36 L9.95 6.68 L9.96 7.00 L9.93 7.34 L9.86 7.67 L9.74 8.00 L9.58 8.31 L9.38 8.62 L9.14 8.90 L8.86 9.15 L8.55 9.37 L8.21 9.56 L7.84 9.71 L7.44 9.81 L7.03 9.87 L6.61 9.87 L6.19 9.82 L5.76 9.72 L5.35 9.57 L4.95 9.37 L4.57 9.11 L4.22 8.81 L3.90 8.46 L3.62 8.07 L3.39 7.64 L3.21 7.18 L3.09 6.69 L3.02 6.19 L3.01 5.68 L3.07 5.16 L3.19 4.64 L3.37 4.13 L3.62 3.65 L3.93 3.19 L4.29 2.76 L4.71 2.38 L5.18 2.05 L5.69 1.77 L6.23 1.55 L6.81 1.39 L7.41 1.31 L8.02 1.29 L8.63 1.36 L9.24 1.49 L9.84 1.70 L10.42 1.98 L10.96 2.34 L11.46 2.76 L11.91 3.24 L12.31 3.78 L12.64 4.37 L12.91 5.00 L13.09 5.67 L13.20 6.36 L13.23 7.06 L13.17 7.78 L13.02 8.48 L12.79 9.17 L12.48 9.84 L12.08 10.47 L11.61 11.05 L11.06 11.58" fill="none" stroke="#000" stroke-width="2.4" stroke-linecap="round"/></svg>
<div style="position:absolute;left:0px;top:356px;width:26px;height:1px;background:#dcdbd9"></div>
<svg style="left:4.5px;top:365.5px" width="17" height="17" viewBox="0 0 17 17"><circle cx="2.8" cy="2.2" r="1.9" fill="#1f9a2e"/><path d="M2.8 3v8" stroke="#1f9a2e" stroke-width="1.4"/><rect x="0.8" y="10.6" width="4" height="3.6" fill="#1f9a2e"/><path d="M4.5 8.5C6 5 8 3.5 11 3.5" fill="none" stroke="#777" stroke-width="0.9"/><path d="M6.5 15.8L9 10.5L12.8 6.6L16 9.6L12 13.4z" fill="#000"/><path d="M9.6 11.2L11.6 10.2" stroke="#fff" stroke-width="1"/></svg>
<svg style="left:5px;top:397px" width="16" height="17" viewBox="0 0 16 17"><path d="M7.6 1.6C5 0.4 2.4 1.6 3.4 3.8C4.4 6 7.8 6.4 6.6 8.8C6 10 4.6 10.6 3 10.6" fill="none" stroke="#2aa53a" stroke-width="1.6"/><path d="M6.8 11.6L14.6 3.8" stroke="#000" stroke-width="3.8"/><path d="M1.6 15.8L3.2 11.6L6.2 14z" fill="#2aa53a"/></svg>
<svg style="left:5px;top:430px" width="16" height="16" viewBox="0 0 16 16"><path d="M5.2 1C6.6 2.4 3.6 3.4 2.6 4.8C1.8 6 4.8 7.4 3.6 9.6" fill="none" stroke="#2aa53a" stroke-width="1.6"/><path d="M1 15.2C1.6 12.6 3.6 11.2 5.8 12.2C5 14.6 3.2 15.6 1 15.2z" fill="#2aa53a"/><path d="M6.6 11.4L15.2 2.4" stroke="#000" stroke-width="2.2"/><path d="M5.6 10.8L8 13" stroke="#000" stroke-width="2"/></svg>
<svg style="left:5px;top:462.5px" width="17" height="16" viewBox="0 0 17 16"><path d="M0.3 13.4L4.3 2.3H7.2L11.2 13.4H8.6L7.8 10.9H3.6L2.8 13.4zM4.3 8.7H7.1L5.7 4.4z" fill="#000"/><rect x="14.3" y="0" width="1.9" height="15.2" fill="#1f9a2e"/></svg>
<div style="position:absolute;left:0px;top:486px;width:26px;height:1px;background:#dcdbd9"></div>
<svg style="left:5px;top:497px" width="16" height="16" viewBox="0 0 16 16"><defs><linearGradient id="gg" x1="0" y1="0" x2="1" y2="1"><stop offset="0" stop-color="#2a8fd6"/><stop offset="1" stop-color="#031c33"/></linearGradient></defs><rect x="0.9" y="0.9" width="14" height="14" fill="#fff" stroke="#000" stroke-width="1.8"/><rect x="2.6" y="2.6" width="10.6" height="10.6" fill="url(#gg)"/></svg>
<svg style="left:5px;top:529px" width="16" height="16" viewBox="0 0 16 16"><defs><radialGradient id="gm" cx="0.5" cy="0.5" r="0.6"><stop offset="0" stop-color="#ffffff"/><stop offset="0.7" stop-color="#cfe6f7"/><stop offset="1" stop-color="#4a9ad6"/></radialGradient></defs><rect x="0.9" y="0.9" width="14.2" height="14.2" fill="url(#gm)" stroke="#000" stroke-width="1.8"/><path d="M7.2 1.2C4.6 2.6 5.8 5.6 8 8C10.2 10.4 11.4 13.4 8.8 14.8M1.2 8.8C2.6 11.4 5.6 10.2 8 8C10.4 5.8 13.4 4.6 14.8 7.2" fill="none" stroke="#0a2a4a" stroke-width="1.5"/></svg>
<svg style="left:5.5px;top:561.5px" width="15" height="15" viewBox="0 0 15 15"><path d="M3.3 0.8C4.5 2.8 6 4.2 6 5.6a2.7 2.7 0 0 1-5.4 0C0.6 4.2 2 2.8 3.3 0.8z" fill="#1a8fe0"/><path d="M2.8 14.2L10.5 6.5" stroke="#000" stroke-width="3"/><path d="M3.4 13.6L10 7" stroke="#fff" stroke-width="1.1"/><path d="M9.2 4.4L12.8 0.8L14.6 2.6L11 6.2z M8.4 4.2L11.2 7" stroke="#000" stroke-width="2.2"/></svg>
<svg style="left:5.5px;top:593px" width="16" height="16" viewBox="0 0 16 16"><path d="M3 8.6C4.2 10.6 5.6 12 5.6 13.3a2.6 2.6 0 0 1-5.2 0C0.4 12 1.8 10.6 3 8.6z" fill="#1a8fe0"/><path d="M3.4 7.1L11 0.3L15.4 6.9L9.8 12.2z" fill="#000"/><path d="M6.6 6.7L10.8 3L13.2 6.7z" fill="#fff"/></svg>
<div style="position:absolute;left:0px;top:617.5px;width:26px;height:1px;background:#dcdbd9"></div>
<svg style="left:5.8px;top:630px" width="15" height="13" viewBox="0 0 15 13"><path d="M0 13V8.6L2.4 6.8H4.6C5 3 7.6 0.6 10.6 0.6C13 0.6 14.6 2.2 14.4 4.2C14 5.8 12.6 6.6 11.2 6C10.2 5.6 10 4.4 10.8 3.6C9 3 7.2 4.6 7 6.8H14.6V13z" fill="#000"/></svg>
<svg style="left:5.8px;top:661.5px" width="15" height="14" viewBox="0 0 15 14"><circle cx="1.2" cy="2.6" r="0.8" fill="#777"/><circle cx="3.2" cy="1" r="0.8" fill="#777"/><circle cx="2.4" cy="5" r="0.8" fill="#777"/><circle cx="4.8" cy="3.4" r="0.8" fill="#777"/><circle cx="1" cy="7.2" r="0.8" fill="#777"/><circle cx="3.6" cy="7.4" r="0.7" fill="#777"/><rect x="8" y="1.2" width="3" height="2" fill="#000"/><path d="M6.6 4.4h6.2l1.4 2V13.6H5.2V6.4z" fill="#000"/></svg>
<svg style="left:6px;top:692.5px" width="15" height="15" viewBox="0 0 15 15"><path d="M10.4 0.5L14.3 4.4L10.2 8.5L6.3 4.6z" fill="#000"/><path d="M6 5L9.8 8.8L7.2 11.4L3.4 7.6z" fill="#8a8a8a"/><rect x="0" y="13" width="3.4" height="1.8" fill="#000"/><rect x="8.6" y="13" width="5.8" height="1.8" fill="#000"/></svg>
<svg style="left:6px;top:725.5px" width="15" height="14" viewBox="0 0 15 14"><path d="M0.6 1.8C3.5 0.5 5 2 6 5S8 8.2 10.5 6.8" fill="none" stroke="#000" stroke-width="2.2"/><path d="M8.5 4.6L14.4 7.5L10 13.2z" fill="#000"/></svg>
<svg style="left:6.5px;top:757px" width="14" height="11" viewBox="0 0 14 11"><path d="M5 2.2a2 2 0 0 1 4 0v2a2 2 0 0 1-4 0z" fill="none" stroke="#000" stroke-width="1.6"/><path d="M5.2 5.2L2 10.5M8.8 5.2L12 10.5" stroke="#000" stroke-width="1.8"/><path d="M0 10.5H14" stroke="#000" stroke-width="1"/><circle cx="7" cy="9.8" r="1.2" fill="#8a8a8a"/></svg>
<svg style="left:34.8px;top:100px" width="13" height="14" viewBox="0 0 13 14"><path d="M7.8 6V3.6a2.3 2.3 0 0 1 4.6 0V5" fill="none" stroke="#000" stroke-width="1.9"/><rect x="0" y="5.6" width="10" height="8.2" fill="#000"/></svg>
<svg style="left:430px;top:112.5px" width="10" height="5" viewBox="0 0 10 5"><path d="M0 0H10L5 4.6z" fill="#000"/></svg>
<svg style="left:46px;top:207px" width="4.5" height="10" viewBox="0 0 4.5 10"><path d="M0 0L4.5 5L0 10z" fill="#000"/></svg>
<div style="position:absolute;left:543px;top:103px;width:1px;height:14px;background:#000"></div>
<div class="t" style="left:545.5px;top:100px;font-size:10px;color:#000;line-height:12px">0</div>
<div style="position:absolute;left:36px;top:128px;width:14px;height:1px;background:#000"></div>
<svg style="left:36px;top:130.5px" width="8" height="5" viewBox="0 0 8 5"><path d="M0.6 0.2V2.2a1.6 1.6 0 0 0 1.6 1.8H5.2a1.6 1.6 0 0 0 1.6-1.8V0.2" fill="none" stroke="#222" stroke-width="1"/></svg>
<div style="position:absolute;left:97.5px;top:116px;width:1px;height:1.5px;background:#000"></div>
<div style="position:absolute;left:987px;top:115.5px;width:1px;height:2px;background:#000"></div>
<div style="position:absolute;left:48.5px;top:572px;width:2px;height:1.2px;background:#000"></div>
<div style="position:absolute;left:29px;top:118px;width:1px;height:628px;background:#e2e1df"></div>
<div style="position:absolute;left:1367px;top:118px;width:21px;height:628px;background:#ebebea"></div>
<div style="position:absolute;left:1373.8px;top:334px;width:8px;height:196.5px;background:#cdcdcd;border-radius:4px"></div>
<div style="position:absolute;left:29px;top:746px;width:1338px;height:22px;background:#ededec"></div>
<div style="position:absolute;left:32px;top:753px;width:1332px;height:8px;background:#d0d0d0;border-radius:4px"></div>
<svg style="left:1375.5px;top:754.5px" width="5" height="5" viewBox="0 0 5 5"><circle cx="2.4" cy="2.4" r="2.3" fill="#000"/></svg>
<svg style="left:1371px;top:101px" width="15" height="13" viewBox="0 0 15 13"><rect x="0.8" y="0.8" width="13" height="9" rx="1" fill="none" stroke="#000" stroke-width="1.5"/><rect x="4" y="11.2" width="7" height="1.6" fill="#000"/></svg>
<svg style="left:1408px;top:109px" width="17" height="16.5" viewBox="0 0 17 16.5"><path d="M0.9 3.2H7.6L11.3 6.9V15.6H0.9z" fill="#fff" stroke="#000" stroke-width="1.8" stroke-linejoin="round"/><path d="M7.6 3.2V6.9H11.3" fill="none" stroke="#000" stroke-width="1.2"/><path d="M13.2 0L14 2.3L16.5 2.4L14.5 3.9L15.2 6.3L13.2 4.9L11.2 6.3L11.9 3.9L9.9 2.4L12.4 2.3z" fill="#1e9a2e"/></svg>
<svg style="left:1408px;top:147px" width="17" height="14.5" viewBox="0 0 17 14.5"><path d="M0 0H5.6L7.3 2H14V5.6H4.2L1.6 13.8H0z" fill="#000"/><path d="M4.6 6.6H16.3L13.6 14H1.8z" fill="#000"/></svg>
<svg style="left:1408.5px;top:182.5px" width="15" height="17" viewBox="0 0 15 17"><path d="M7.5 0V6.5" stroke="#1e9a2e" stroke-width="2.2"/><path d="M3.6 5.4L7.5 9.6L11.4 5.4z" fill="#1e9a2e"/><path d="M0 9.2H3.6V10.8H11.4V9.2H15V16.6H0z M4.5 12.8v1.1h6v-1.1z" fill="#000"/><path d="M0.6 8.6L2.2 7.8M14.4 8.6L12.8 7.8" stroke="#000" stroke-width="1"/></svg>
<svg style="left:1408.5px;top:220.5px" width="15" height="14" viewBox="0 0 15 14"><rect x="3.2" y="0" width="8.6" height="3.2" fill="#000"/><path d="M0 4.4H15V10.6H12.4V8.4H2.6V10.6H0z" fill="#000"/><rect x="3.4" y="8.8" width="8.2" height="5" fill="#000"/></svg>
<div style="position:absolute;left:1397.5px;top:248px;width:36px;height:1px;background:#dcdbd9"></div>
<svg style="left:1408.5px;top:260.5px" width="15" height="16" viewBox="0 0 15 16"><path d="M3.4 11.2V14.6H13.9V6L8.8 0.9H3.4V6.2" fill="none" stroke="#000" stroke-width="1.9"/><path d="M8.8 0.9V6H13.9" fill="none" stroke="#000" stroke-width="1.2"/><path d="M0 8.5H6" stroke="#1e9a2e" stroke-width="2"/><path d="M5.4 5.6L9.6 8.5L5.4 11.4z" fill="#1e9a2e"/></svg>
<svg style="left:1408px;top:298px" width="17" height="15" viewBox="0 0 17 15"><path d="M11.4 6.8V5.6L6.6 0.9H0.9V14.1H11.4V11.4" fill="none" stroke="#000" stroke-width="1.9"/><path d="M6.6 0.9V5.6H11.4" fill="none" stroke="#000" stroke-width="1.2"/><path d="M8 9H14" stroke="#1e9a2e" stroke-width="2"/><path d="M13.4 6.1L17 9L13.4 11.9z" fill="#1e9a2e"/></svg>
<div style="position:absolute;left:1397.5px;top:326px;width:36px;height:1px;background:#dcdbd9"></div>
<svg style="left:1409.5px;top:341px" width="14" height="13" viewBox="0 0 14 13"><path d="M-0.1 3.8L3.6 0.1V7.6z" fill="#8a8a8a"/><path d="M3.2 3.9H7.7A3.5 3.5 0 0 1 9.3 10.6" fill="none" stroke="#8a8a8a" stroke-width="2.2"/></svg>
<svg style="left:1409.5px;top:378px" width="14" height="13" viewBox="0 0 14 13"><path d="M13.7 4L10 0.4V7.6z" fill="#8a8a8a"/><path d="M10.5 4H6A3.5 3.5 0 0 0 4.4 10.6" fill="none" stroke="#8a8a8a" stroke-width="2.2"/></svg>
<div style="position:absolute;left:1397.5px;top:403.5px;width:36px;height:1px;background:#dcdbd9"></div>
<svg style="left:1408px;top:416.5px" width="17" height="17" viewBox="0 0 17 17"><rect x="0" y="0.4" width="11" height="10.4" fill="#000"/><rect x="4.4" y="5.2" width="12" height="11.4" fill="#000" stroke="#f5f4f2" stroke-width="1.2"/></svg>
<svg style="left:1408px;top:454px" width="16.5" height="15" viewBox="0 0 16.5 15"><path d="M3 0.5L11 9.5M13.5 0.5L5.5 9.5" stroke="#000" stroke-width="1.8"/><circle cx="3.6" cy="11.3" r="2.7" fill="none" stroke="#000" stroke-width="1.8"/><circle cx="12.9" cy="11.3" r="2.7" fill="none" stroke="#000" stroke-width="1.8"/></svg>
<svg style="left:1408.5px;top:491.5px" width="14" height="15" viewBox="0 0 14 15"><rect x="0.9" y="2.2" width="12" height="12" fill="none" stroke="#000" stroke-width="1.8"/><rect x="4" y="0.4" width="6" height="3" fill="#000"/><path d="M3 4.6H10.8V12H6.4L3 8.8z" fill="#000"/></svg>
<div style="position:absolute;left:1397.5px;top:519px;width:36px;height:1px;background:#dcdbd9"></div>
<div style="position:absolute;left:1398.5px;top:523px;width:35px;height:32px;background:#f6f5f4;border:1px solid #dcdbd9;border-radius:5px"></div>
<svg style="left:1410.5px;top:536px" width="11.5" height="7" viewBox="0 0 11.5 7"><path d="M0 0H11.5L5.75 6.6z" fill="#000"/></svg>
<div style="position:absolute;left:0px;top:768px;width:1435px;height:36px;background:#f5f4f2"></div>
<div style="position:absolute;left:0px;top:769.8px;width:34px;height:33px;background:#fff"></div>
<svg style="left:2.5px;top:771.5px" width="30" height="30" viewBox="0 0 30 30"><path d="M1.6 1.6L28.4 28.4M28.4 1.6L1.6 28.4" stroke="#c8283c" stroke-width="3" stroke-linecap="round"/></svg>
<div style="position:absolute;left:34.8px;top:769.8px;width:33.2px;height:33px;background:#000"></div>
<div style="position:absolute;left:69.2px;top:769.8px;width:32.8px;height:33px;background:#808080"></div>
<div style="position:absolute;left:103px;top:769.8px;width:33px;height:33px;background:#fff"></div>
<div style="position:absolute;left:137px;top:769.8px;width:22px;height:16.2px;background:#1a1a1a"></div>
<div style="position:absolute;left:160px;top:769.8px;width:22px;height:16.2px;background:#333333"></div>
<div style="position:absolute;left:183px;top:769.8px;width:22px;height:16.2px;background:#4d4d4d"></div>
<div style="position:absolute;left:206px;top:769.8px;width:22px;height:16.2px;background:#666666"></div>
<div style="position:absolute;left:229px;top:769.8px;width:22px;height:16.2px;background:#999999"></div>
<div style="position:absolute;left:252px;top:769.8px;width:22px;height:16.2px;background:#b3b3b3"></div>
<div style="position:absolute;left:275px;top:769.8px;width:22px;height:16.2px;background:#cccccc"></div>
<div style="position:absolute;left:298px;top:769.8px;width:22px;height:16.2px;background:#e6e6e6"></div>
<div style="position:absolute;left:321px;top:769.8px;width:22px;height:16.2px;background:#ececec"></div>
<div style="position:absolute;left:344px;top:769.8px;width:22px;height:16.2px;background:#f2f2f2"></div>
<div style="position:absolute;left:367px;top:769.8px;width:22px;height:16.2px;background:#f9f9f9"></div>
<div style="position:absolute;left:390px;top:769.8px;width:22px;height:16.2px;background:#800000"></div>
<div style="position:absolute;left:413px;top:769.8px;width:22px;height:16.2px;background:#ff0000"></div>
<div style="position:absolute;left:436px;top:769.8px;width:22px;height:16.2px;background:#808000"></div>
<div style="position:absolute;left:459px;top:769.8px;width:22px;height:16.2px;background:#ffff00"></div>
<div style="position:absolute;left:482px;top:769.8px;width:22px;height:16.2px;background:#008000"></div>
<div style="position:absolute;left:505px;top:769.8px;width:22px;height:16.2px;background:#00ff00"></div>
<div style="position:absolute;left:528px;top:769.8px;width:22px;height:16.2px;background:#008080"></div>
<div style="position:absolute;left:551px;top:769.8px;width:22px;height:16.2px;background:#00ffff"></div>
<div style="position:absolute;left:574px;top:769.8px;width:22px;height:16.2px;background:#000080"></div>
<div style="position:absolute;left:597px;top:769.8px;width:22px;height:16.2px;background:#0000ff"></div>
<div style="position:absolute;left:620px;top:769.8px;width:22px;height:16.2px;background:#800080"></div>
<div style="position:absolute;left:643px;top:769.8px;width:22px;height:16.2px;background:#ff00ff"></div>
<div style="position:absolute;left:666px;top:769.8px;width:22px;height:16.2px;background:#2b0000"></div>
<div style="position:absolute;left:689px;top:769.8px;width:22px;height:16.2px;background:#550000"></div>
<div style="position:absolute;left:712px;top:769.8px;width:22px;height:16.2px;background:#800000"></div>
<div style="position:absolute;left:735px;top:769.8px;width:22px;height:16.2px;background:#aa0000"></div>
<div style="position:absolute;left:758px;top:769.8px;width:22px;height:16.2px;background:#d40000"></div>
<div style="position:absolute;left:781px;top:769.8px;width:22px;height:16.2px;background:#ff0000"></div>
<div style="position:absolute;left:804px;top:769.8px;width:22px;height:16.2px;background:#ff2a2a"></div>
<div style="position:absolute;left:827px;top:769.8px;width:22px;height:16.2px;background:#ff5555"></div>
<div style="position:absolute;left:850px;top:769.8px;width:22px;height:16.2px;background:#ff8080"></div>
<div style="position:absolute;left:873px;top:769.8px;width:22px;height:16.2px;background:#ffaaaa"></div>
<div style="position:absolute;left:896px;top:769.8px;width:22px;height:16.2px;background:#ffd5d5"></div>
<div style="position:absolute;left:919px;top:769.8px;width:22px;height:16.2px;background:#280b0b"></div>
<div style="position:absolute;left:942px;top:769.8px;width:22px;height:16.2px;background:#501616"></div>
<div style="position:absolute;left:965px;top:769.8px;width:22px;height:16.2px;background:#782121"></div>
<div style="position:absolute;left:988px;top:769.8px;width:22px;height:16.2px;background:#a02c2c"></div>
<div style="position:absolute;left:1011px;top:769.8px;width:22px;height:16.2px;background:#c83737"></div>
<div style="position:absolute;left:1034px;top:769.8px;width:22px;height:16.2px;background:#d35f5f"></div>
<div style="position:absolute;left:1057px;top:769.8px;width:22px;height:16.2px;background:#de8787"></div>
<div style="position:absolute;left:1080px;top:769.8px;width:22px;height:16.2px;background:#e9afaf"></div>
<div style="position:absolute;left:1103px;top:769.8px;width:22px;height:16.2px;background:#f4d7d7"></div>
<div style="position:absolute;left:1126px;top:769.8px;width:22px;height:16.2px;background:#241c1c"></div>
<div style="position:absolute;left:1149px;top:769.8px;width:22px;height:16.2px;background:#483737"></div>
<div style="position:absolute;left:1172px;top:769.8px;width:22px;height:16.2px;background:#6c5353"></div>
<div style="position:absolute;left:1195px;top:769.8px;width:22px;height:16.2px;background:#916f6f"></div>
<div style="position:absolute;left:1218px;top:769.8px;width:22px;height:16.2px;background:#ac9393"></div>
<div style="position:absolute;left:1241px;top:769.8px;width:22px;height:16.2px;background:#c8b7b7"></div>
<div style="position:absolute;left:1264px;top:769.8px;width:22px;height:16.2px;background:#e3dbdb"></div>
<div style="position:absolute;left:1286.5px;top:769.8px;width:20.2px;height:16.2px;background:#2b1100"></div>
<div style="position:absolute;left:1308.55px;top:769.8px;width:20.2px;height:16.2px;background:#552200"></div>
<div style="position:absolute;left:1330.6px;top:769.8px;width:20.2px;height:16.2px;background:#803300"></div>
<div style="position:absolute;left:1352.65px;top:769.8px;width:20.2px;height:16.2px;background:#aa4400"></div>
<div style="position:absolute;left:137px;top:787px;width:22px;height:15.8px;background:#d45500"></div>
<div style="position:absolute;left:160px;top:787px;width:22px;height:15.8px;background:#ff6600"></div>
<div style="position:absolute;left:183px;top:787px;width:22px;height:15.8px;background:#ff7f2a"></div>
<div style="position:absolute;left:206px;top:787px;width:22px;height:15.8px;background:#ff9955"></div>
<div style="position:absolute;left:229px;top:787px;width:22px;height:15.8px;background:#ffb380"></div>
<div style="position:absolute;left:252px;top:787px;width:22px;height:15.8px;background:#ffccaa"></div>
<div style="position:absolute;left:275px;top:787px;width:22px;height:15.8px;background:#ffe6d5"></div>
<div style="position:absolute;left:298px;top:787px;width:22px;height:15.8px;background:#28170b"></div>
<div style="position:absolute;left:321px;top:787px;width:22px;height:15.8px;background:#502d16"></div>
<div style="position:absolute;left:344px;top:787px;width:22px;height:15.8px;background:#784421"></div>
<div style="position:absolute;left:367px;top:787px;width:22px;height:15.8px;background:#a05a2c"></div>
<div style="position:absolute;left:390px;top:787px;width:22px;height:15.8px;background:#c87137"></div>
<div style="position:absolute;left:413px;top:787px;width:22px;height:15.8px;background:#d38d5f"></div>
<div style="position:absolute;left:436px;top:787px;width:22px;height:15.8px;background:#deaa87"></div>
<div style="position:absolute;left:459px;top:787px;width:22px;height:15.8px;background:#e9c6af"></div>
<div style="position:absolute;left:482px;top:787px;width:22px;height:15.8px;background:#f4e3d7"></div>
<div style="position:absolute;left:505px;top:787px;width:22px;height:15.8px;background:#241f1c"></div>
<div style="position:absolute;left:528px;top:787px;width:22px;height:15.8px;background:#483e37"></div>
<div style="position:absolute;left:551px;top:787px;width:22px;height:15.8px;background:#6c5d53"></div>
<div style="position:absolute;left:574px;top:787px;width:22px;height:15.8px;background:#917c6f"></div>
<div style="position:absolute;left:597px;top:787px;width:22px;height:15.8px;background:#ac9d93"></div>
<div style="position:absolute;left:620px;top:787px;width:22px;height:15.8px;background:#c8beb7"></div>
<div style="position:absolute;left:643px;top:787px;width:22px;height:15.8px;background:#e3dedb"></div>
<div style="position:absolute;left:666px;top:787px;width:22px;height:15.8px;background:#2b2200"></div>
<div style="position:absolute;left:689px;top:787px;width:22px;height:15.8px;background:#554400"></div>
<div style="position:absolute;left:712px;top:787px;width:22px;height:15.8px;background:#806600"></div>
<div style="position:absolute;left:735px;top:787px;width:22px;height:15.8px;background:#aa8800"></div>
<div style="position:absolute;left:758px;top:787px;width:22px;height:15.8px;background:#d4aa00"></div>
<div style="position:absolute;left:781px;top:787px;width:22px;height:15.8px;background:#ffcc00"></div>
<div style="position:absolute;left:804px;top:787px;width:22px;height:15.8px;background:#ffd42a"></div>
<div style="position:absolute;left:827px;top:787px;width:22px;height:15.8px;background:#ffdd55"></div>
<div style="position:absolute;left:850px;top:787px;width:22px;height:15.8px;background:#ffe680"></div>
<div style="position:absolute;left:873px;top:787px;width:22px;height:15.8px;background:#ffeeaa"></div>
<div style="position:absolute;left:896px;top:787px;width:22px;height:15.8px;background:#fff6d5"></div>
<div style="position:absolute;left:919px;top:787px;width:22px;height:15.8px;background:#28220b"></div>
<div style="position:absolute;left:942px;top:787px;width:22px;height:15.8px;background:#504416"></div>
<div style="position:absolute;left:965px;top:787px;width:22px;height:15.8px;background:#786721"></div>
<div style="position:absolute;left:988px;top:787px;width:22px;height:15.8px;background:#a0892c"></div>
<div style="position:absolute;left:1011px;top:787px;width:22px;height:15.8px;background:#c8ab37"></div>
<div style="position:absolute;left:1034px;top:787px;width:22px;height:15.8px;background:#d3bc5f"></div>
<div style="position:absolute;left:1057px;top:787px;width:22px;height:15.8px;background:#decd87"></div>
<div style="position:absolute;left:1080px;top:787px;width:22px;height:15.8px;background:#e9ddaf"></div>
<div style="position:absolute;left:1103px;top:787px;width:22px;height:15.8px;background:#f4eed7"></div>
<div style="position:absolute;left:1126px;top:787px;width:22px;height:15.8px;background:#24221c"></div>
<div style="position:absolute;left:1149px;top:787px;width:22px;height:15.8px;background:#484537"></div>
<div style="position:absolute;left:1172px;top:787px;width:22px;height:15.8px;background:#6c6753"></div>
<div style="position:absolute;left:1195px;top:787px;width:22px;height:15.8px;background:#918a6f"></div>
<div style="position:absolute;left:1218px;top:787px;width:22px;height:15.8px;background:#aca793"></div>
<div style="position:absolute;left:1241px;top:787px;width:22px;height:15.8px;background:#c8c4b7"></div>
<div style="position:absolute;left:1264px;top:787px;width:22px;height:15.8px;background:#e3e2db"></div>
<div style="position:absolute;left:1286.5px;top:787px;width:20.2px;height:15.8px;background:#222b00"></div>
<div style="position:absolute;left:1308.55px;top:787px;width:20.2px;height:15.8px;background:#445500"></div>
<div style="position:absolute;left:1330.6px;top:787px;width:20.2px;height:15.8px;background:#668000"></div>
<div style="position:absolute;left:1352.65px;top:787px;width:20.2px;height:15.8px;background:#88aa00"></div>
<svg style="left:1378.5px;top:784px" width="12" height="7" viewBox="0 0 12 7"><path d="M0.8 6.2L6 1.2L11.2 6.2" fill="none" stroke="#9a9a9a" stroke-width="1.8"/></svg>
<svg style="left:1400.5px;top:782px" width="13" height="8" viewBox="0 0 13 8"><path d="M0.8 1.2L6.5 6.6L12.2 1.2" fill="none" stroke="#000" stroke-width="2"/></svg>
<svg style="left:1421.5px;top:783px" width="14" height="13" viewBox="0 0 14 13"><path d="M0 1.5H14M0 6.5H14M0 11.5H14" stroke="#000" stroke-width="2"/></svg>
<div class="t" style="left:18px;top:807px;color:#8f8f8f">Fill:</div>
<div class="t" style="left:70.4px;top:807px;color:#8f8f8f">N/A</div>
<div class="t" style="left:1.2px;top:824px;color:#8f8f8f">Stroke:</div>
<div class="t" style="left:70.4px;top:824px;color:#8f8f8f">N/A</div>
<div class="t" style="left:156px;top:814.6px;color:#8a8a8a">O:</div>
<div style="position:absolute;left:174.5px;top:805.5px;width:71px;height:40px;background:#f6f5f4;border:1px solid #dcdbd9;border-radius:5px"></div>
<div class="t" style="left:181.2px;top:814.6px;color:#c4c4c4">100</div>
<div style="position:absolute;left:211.5px;top:806.5px;width:1px;height:24px;background:#e6e5e3"></div>
<div style="position:absolute;left:228.5px;top:806.5px;width:1px;height:24px;background:#e6e5e3"></div>
<div style="position:absolute;left:214.5px;top:821.5px;width:11px;height:1px;background:#d4d4d4"></div>
<div style="position:absolute;left:231.5px;top:821.5px;width:11px;height:1px;background:#d4d4d4"></div>
<div style="position:absolute;left:236.5px;top:816px;width:1px;height:11px;background:#d4d4d4"></div>
<div style="position:absolute;left:261px;top:808px;width:2px;height:22px;background:#fff"></div>
<div class="t" style="left:270px;top:814.6px;color:#8a8a8a;font-style:italic">[root]</div>
<svg style="left:319px;top:815px" width="14" height="11" viewBox="0 0 14 11"><path d="M0.5 6.2C2.5 3 4.8 2 7 2S11.5 3 13.5 6.2C11.5 9.4 9.2 10.4 7 10.4S2.5 9.4 0.5 6.2z" fill="none" stroke="#888" stroke-width="1.6"/><circle cx="7" cy="6.2" r="2.6" fill="#888"/><path d="M2 2L3 3.4M7 0.2V1.8M12 2L11 3.4" stroke="#888" stroke-width="1.2"/></svg>
<svg style="left:356.5px;top:814px" width="14" height="14" viewBox="0 0 14 14"><path d="M7.8 6V3.8a2.3 2.3 0 0 1 4.6 0V5" fill="none" stroke="#8a8a8a" stroke-width="1.9"/><rect x="0" y="5.8" width="10" height="8.2" fill="#8a8a8a"/></svg>
<div style="position:absolute;left:381px;top:808px;width:1px;height:22px;background:#dcdbd9"></div>
<div class="t" style="left:388.2px;top:814.6px;color:#8a8a8a">No objects selected. Click, Shift+click, Alt+scroll mouse on top of objects, or drag around objects to select.</div>
<svg style="left:1065.5px;top:814px" width="7" height="12" viewBox="0 0 7 12"><path d="M6.6 0V11.4L0 5.7z" fill="#9a9a9a"/></svg>
<div style="position:absolute;left:1087.5px;top:805.5px;width:35px;height:40px;background:#f6f5f4;border:1px solid #dcdbd9;border-radius:5px"></div>
<svg style="left:1099.5px;top:817px" width="11.5" height="6" viewBox="0 0 11.5 6"><path d="M0 0H11.5L5.75 5.6z" fill="#c4c4c4"/></svg>
<svg style="left:1137.5px;top:814px" width="7" height="12" viewBox="0 0 7 12"><path d="M0 0V11.4L6.6 5.7z" fill="#9a9a9a"/></svg>
<div style="position:absolute;left:1159.5px;top:808px;width:1px;height:22px;background:#dcdbd9"></div>
<div class="t" style="left:1166px;top:807px;color:#8f8f8f">X:</div>
<div class="t" style="left:1192.5px;top:807px;color:#8f8f8f">-0.02</div>
<div class="t" style="left:1166px;top:824px;color:#8f8f8f">Y:</div>
<div class="t" style="left:1192.5px;top:824px;color:#8f8f8f">-0.01</div>
<div class="t" style="left:1230px;top:814.6px;color:#8f8f8f">Z:</div>
<div style="position:absolute;left:1244.8px;top:805.5px;width:76.5px;height:40px;background:#fff;border:1px solid #dcdbd9;border-radius:5px"></div>
<div class="t" style="left:1251px;top:814.6px;color:#3a3a3a">7405%</div>
<div style="position:absolute;left:1287.5px;top:806.5px;width:1px;height:24px;background:#ececec"></div>
<div style="position:absolute;left:1304.3px;top:806.5px;width:1px;height:24px;background:#ececec"></div>
<div style="position:absolute;left:1290px;top:821.5px;width:12px;height:1.6px;background:#7a7a7a"></div>
<div style="position:absolute;left:1307px;top:821.5px;width:12px;height:1.6px;background:#7a7a7a"></div>
<div style="position:absolute;left:1312.2px;top:816px;width:1.6px;height:12px;background:#7a7a7a"></div>
<div class="t" style="left:1332.5px;top:814.6px;color:#8f8f8f">R:</div>
<div style="position:absolute;left:1346.6px;top:805.5px;width:83.4px;height:40px;background:#fff;border:1px solid #dcdbd9;border-radius:5px"></div>
<div class="t" style="left:1361.8px;top:814.6px;color:#3a3a3a">0.00°</div>
<div style="position:absolute;left:1395.4px;top:806.5px;width:1px;height:24px;background:#ececec"></div>
<div style="position:absolute;left:1412px;top:806.5px;width:1px;height:24px;background:#ececec"></div>
<div style="position:absolute;left:1397.5px;top:821.5px;width:12px;height:1.6px;background:#7a7a7a"></div>
<div style="position:absolute;left:1414.5px;top:821.5px;width:12px;height:1.6px;background:#7a7a7a"></div>
<div style="position:absolute;left:1419.7px;top:816px;width:1.6px;height:12px;background:#7a7a7a"></div>
<svg style="left:936.5px;top:181px" width="16" height="16" viewBox="0 0 16 16"><rect x="0.7" y="0.7" width="14.6" height="14.6" fill="#fff" stroke="#111" stroke-width="1.4"/><rect x="2.2" y="2.6" width="11.6" height="1.6" fill="#1e9a2e"/><path d="M6.6 5.6L2.8 9.4L6.6 13.2M9.4 5.6L13.2 9.4L9.4 13.2" fill="none" stroke="#111" stroke-width="1.3"/></svg>
<svg style="left:927px;top:218px" width="16" height="16" viewBox="0 0 16 16"><rect x="0.6" y="0.6" width="14.8" height="14.8" fill="#fff" stroke="#222" stroke-width="1.2"/><text x="8" y="6.8" font-size="6.2" font-family="Liberation Sans" font-weight="bold" text-anchor="middle" fill="#333">xml</text><path d="M4.4 8.2L2.2 10.6L4.4 13M6.4 8.2L8.6 10.6L6.4 13" fill="none" stroke="#6a5a7a" stroke-width="0.9"/><path d="M12.2 8.4V12.8M10 10.6H14.4" stroke="#1e9a2e" stroke-width="1.5"/></svg>
<svg style="left:963px;top:218px" width="16" height="16" viewBox="0 0 16 16"><rect x="0.6" y="0.6" width="14.8" height="14.8" fill="#fff" stroke="#222" stroke-width="1.2"/><text x="8" y="6.8" font-size="6.2" font-family="Liberation Sans" font-weight="bold" text-anchor="middle" fill="#444">abc</text><path d="M4.4 8.2L2.2 10.6L4.4 13M6.4 8.2L8.6 10.6L6.4 13" fill="none" stroke="#6a5a7a" stroke-width="0.9"/><path d="M12.2 8.4V12.8M10 10.6H14.4" stroke="#1e9a2e" stroke-width="1.5"/></svg>
<svg style="left:999px;top:218px" width="16" height="16" viewBox="0 0 16 16"><rect x="0.5" y="0.5" width="11.4" height="11.4" fill="#fff" stroke="#bdbdbd" stroke-width="1"/><rect x="4.5" y="4.4" width="11" height="11.2" fill="#fff" stroke="#bdbdbd" stroke-width="1"/><path d="M8 6.4L6.6 8L8 9.6M11.4 6.4L12.8 8L11.4 9.6" fill="none" stroke="#c8c8c8" stroke-width="0.8"/><path d="M12.4 11.2v3M10.9 12.7h3" stroke="#b8d8b8" stroke-width="1"/></svg>
<svg style="left:1035px;top:218px" width="16" height="16" viewBox="0 0 16 16"><rect x="0.5" y="0.5" width="15" height="15" fill="#fff" stroke="#c4c4c4" stroke-width="1"/><path d="M3.6 2.4L2 3.8L3.6 5.2M6 2.4L7.6 3.8L6 5.2" fill="none" stroke="#c8c8c8" stroke-width="0.8"/><path d="M8.6 8.2L13.6 13.6M13.6 8.2L8.6 13.6" stroke="#f0a0c8" stroke-width="2"/></svg>
<svg style="left:1073px;top:220px" width="13" height="12" viewBox="0 0 13 12"><rect x="0" y="0.6" width="5" height="1.6" fill="#c4c4c4"/><rect x="0" y="5.2" width="6" height="1.6" fill="#c4c4c4"/><path d="M11.6 1L8.8 3.6L11.6 6.2" fill="none" stroke="#9cc89c" stroke-width="1.8"/><rect x="5" y="9.4" width="7" height="1.8" fill="#8a8a8a"/></svg>
<svg style="left:1108.5px;top:220px" width="13" height="12" viewBox="0 0 13 12"><path d="M1 1L3.8 3.6L1 6.2" fill="none" stroke="#9cc89c" stroke-width="1.8"/><rect x="6.4" y="0.6" width="6" height="1.6" fill="#c4c4c4"/><rect x="6.4" y="5.2" width="6.4" height="1.6" fill="#c4c4c4"/><rect x="0" y="9.4" width="7" height="1.8" fill="#8a8a8a"/></svg>
<svg style="left:1145px;top:222.5px" width="12.5" height="8" viewBox="0 0 12.5 8"><path d="M0.8 7L6.2 1.4L11.6 7" fill="none" stroke="#8a8a8a" stroke-width="1.9"/></svg>
<svg style="left:1181px;top:221.5px" width="12.5" height="8" viewBox="0 0 12.5 8"><path d="M0.8 1L6.2 6.6L11.6 1" fill="none" stroke="#8a8a8a" stroke-width="1.9"/></svg>
<svg style="left:1320px;top:218px" width="16" height="16" viewBox="0 0 16 16"><path d="M9 14.4H0.6V0.6H14.4V9" fill="none" stroke="#000" stroke-width="1.2"/><path d="M2.1 2.1H12.9V5.8H6V12.8H2.1z" fill="#000"/><path d="M10.2 14.7L14.7 10.2M12.8 15L15 12.8" stroke="#000" stroke-width="1.1"/></svg>
<svg style="left:1338px;top:222.5px" width="12" height="7" viewBox="0 0 12 7"><path d="M0 0H11.6L5.8 6.8z" fill="#9a9a9a"/></svg>
<div style="position:absolute;left:26px;top:96px;width:1px;height:672px;background:#dcdbd9"></div>
</body></html>
